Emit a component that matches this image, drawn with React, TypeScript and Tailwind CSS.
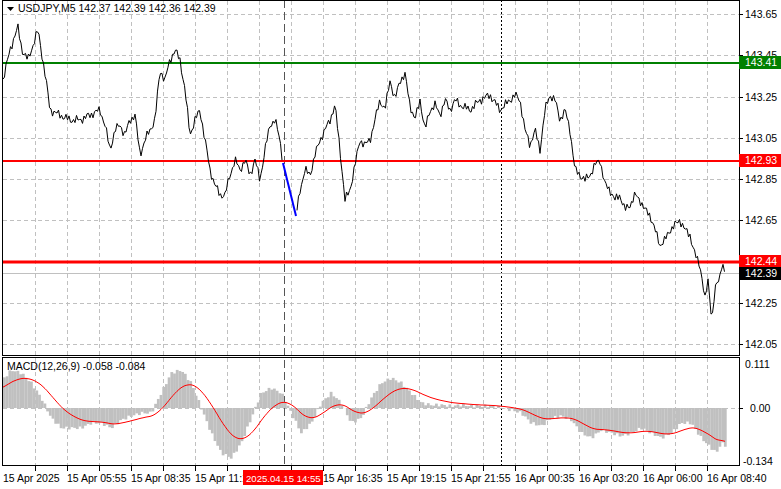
import React from "react";

const priceKeys: [number, number][] = [[3,80],[10,50],[15,35],[18,28],[22,50],[28,60],[33,45],[38,30],[42,55],[46,80],[50,110],[60,115],[70,120],[80,120],[90,115],[100,110],[105,125],[110,150],[115,130],[120,125],[125,135],[130,120],[135,115],[140,155],[145,140],[155,120],[160,70],[165,80],[170,60],[175,50],[180,60],[185,90],[190,135],[195,120],[200,110],[205,140],[210,170],[215,185],[220,195],[225,195],[230,175],[235,160],[240,170],[245,160],[250,175],[255,160],[260,180],[265,150],[270,125],[275,120],[280,140],[283,163],[296,215],[297,210],[300,190],[305,170],[310,175],[315,155],[320,140],[325,130],[330,120],[335,105],[340,150],[345,200],[350,190],[355,165],[360,140],[365,145],[370,140],[375,120],[380,100],[385,110],[390,80],[395,100],[400,80],[405,75],[410,105],[415,120],[420,100],[425,130],[430,110],[435,105],[440,115],[445,100],[450,110],[455,100],[460,105],[470,110],[480,100],[490,95],[500,110],[510,100],[515,95],[520,100],[525,130],[530,145],[535,130],[540,150],[545,110],[550,95],[555,100],[560,120],[565,110],[570,130],[575,170],[580,175],[585,180],[590,175],[595,165],[600,160],[605,185],[610,190],[615,200],[620,195],[625,210],[630,205],[635,195],[640,200],[645,210],[650,215],[655,230],[660,245],[665,240],[670,230],[675,225],[680,220],[685,230],[690,235],[695,255],[700,265],[703,285],[705,300],[708,280],[712,320],[715,290],[720,275],[722,262],[725,275]];

const histKeys: [number, number][] = [[3,30],[10,38],[20,35],[30,25],[40,10],[50,-10],[60,-20],[70,-20],[80,-20],[90,-15],[100,-15],[110,-20],[120,-12],[130,-8],[140,-5],[150,-5],[160,15],[170,35],[180,38],[190,25],[200,0],[210,-25],[220,-45],[230,-50],[240,-35],[250,-10],[260,15],[270,20],[280,15],[290,-5],[300,-25],[310,-15],[320,5],[330,15],[340,5],[350,-15],[360,-10],[370,10],[380,25],[390,30],[400,25],[410,15],[420,5],[430,3],[440,3],[450,2],[460,3],[470,2],[480,2],[490,2],[500,0],[510,-2],[520,-5],[530,-15],[540,-18],[550,-10],[560,-8],[570,-12],[580,-25],[590,-30],[600,-22],[610,-25],[620,-28],[630,-25],[640,-20],[650,-25],[660,-30],[670,-25],[680,-15],[690,-15],[700,-30],[710,-40],[715,-45],[720,-35],[725,-38]];

function interp(keys: [number, number][], x: number) {
  for (let i = 0; i < keys.length - 1; i++) {
    const [x0, y0] = keys[i], [x1, y1] = keys[i + 1];
    if (x >= x0 && x <= x1) return y0 + ((y1 - y0) * (x - x0)) / (x1 - x0 || 1);
  }
  return keys[keys.length - 1][1];
}

const mainPts: string[] = [];
for (let x = 3; x <= 725; x += 1.5) {
  if (x > 283 && x < 296) continue;
  const n = Math.sin(x * 1.7) * 3 + Math.sin(x * 0.63) * 2;
  mainPts.push(`${x},${(interp(priceKeys, x) + n).toFixed(1)}`);
}
const firstPart = mainPts.filter((p) => parseFloat(p) <= 283).join(" ");
const secondPart = mainPts.filter((p) => parseFloat(p) >= 296).join(" ");

const zero = 408;
const bars: { x: number; h: number }[] = [];
for (let x = 3; x <= 725; x += 2.7) bars.push({ x, h: interp(histKeys, x) + Math.sin(x * 0.9) * 1.5 });
const sig: string[] = [];
let s = 20;
for (let x = 3; x <= 725; x += 2) {
  s = s + (interp(histKeys, x) - s) * 0.09;
  sig.push(`${x},${(zero - s).toFixed(1)}`);
}

const levels = ["143.65", "143.45", "143.25", "143.05", "142.85", "142.65", "142.25", "142.05"];
const yOf = (p: number) => 14 + ((143.65 - p) / 0.2) * 41.25;
const vGrid = [35, 67, 99, 131, 163, 195, 227, 259, 291, 323, 355, 387, 419, 451, 483, 515, 547, 579, 611, 643, 675, 707];
const times: [number, string][] = [[3, "15 Apr 2025"], [67, "15 Apr 05:55"], [131, "15 Apr 08:35"], [195, "15 Apr 11:1"], [323, "15 Apr 16:35"], [387, "15 Apr 19:15"], [451, "15 Apr 21:55"], [515, "16 Apr 00:35"], [579, "16 Apr 03:20"], [643, "16 Apr 06:00"], [707, "16 Apr 08:40"]];

export default function App() {
  return (
    <div className="w-[781px] h-[489px] bg-white overflow-hidden" style={{ fontFamily: '"Liberation Sans", Arial, sans-serif' }}>
      <svg width="781" height="489" className="block" fontFamily='"Liberation Sans", Arial, sans-serif' fontSize="10.5">
        {vGrid.map((x) => (
          <g key={x}>
            <line x1={x + 0.5} y1={1} x2={x + 0.5} y2={355} stroke="#c0c0c0" strokeDasharray="4 3" />
            <line x1={x + 0.5} y1={358} x2={x + 0.5} y2={465} stroke="#c0c0c0" strokeDasharray="4 3" />
            <line x1={x + 0.5} y1={466} x2={x + 0.5} y2={471} stroke="#000" />
          </g>
        ))}
        {levels.map((l) => (
          <g key={l}>
            <line x1={3} y1={Math.round(yOf(+l)) + 0.5} x2={739} y2={Math.round(yOf(+l)) + 0.5} stroke="#c0c0c0" strokeDasharray="4 3" />
            <line x1={739} y1={Math.round(yOf(+l)) + 0.5} x2={743} y2={Math.round(yOf(+l)) + 0.5} stroke="#000" />
            <text x={745} y={Math.round(yOf(+l)) + 4} fill="#000">{l}</text>
          </g>
        ))}
        <line x1={3} y1={408.5} x2={739} y2={408.5} stroke="#c0c0c0" strokeDasharray="4 3" />
        <line x1={284.5} y1={0} x2={284.5} y2={466} stroke="#555" strokeDasharray="8 4" />
        <line x1={501.5} y1={0} x2={501.5} y2={466} stroke="#000" strokeDasharray="2 2" />
        <line x1={3} y1={273.5} x2={739} y2={273.5} stroke="#c0c0c0" />
        <line x1={3} y1={63} x2={739} y2={63} stroke="#008000" strokeWidth={2} />
        <line x1={3} y1={161} x2={739} y2={161} stroke="#ff0000" strokeWidth={2} />
        <line x1={3} y1={262} x2={739} y2={262} stroke="#ff0000" strokeWidth={3} />
        <polyline points={firstPart} fill="none" stroke="#000" strokeWidth={1} />
        <polyline points={secondPart} fill="none" stroke="#000" strokeWidth={1} />
        <line x1={283} y1={163} x2={296} y2={216} stroke="#0000ff" strokeWidth={2} />
        {bars.map((b, i) => (
          <rect key={i} x={b.x} y={b.h > 0 ? zero - b.h : zero} width={2.8} height={Math.abs(b.h)} fill="#c0c0c0" />
        ))}
        <polyline points={sig.join(" ")} fill="none" stroke="#ff0000" strokeWidth={1} />
        <rect x={2.5} y={0.5} width={737} height={355} fill="none" stroke="#000" />
        <rect x={2.5} y={357.5} width={737} height={108} fill="none" stroke="#000" />
        <rect x={739} y={56} width={42} height={13} fill="#008000" />
        <text x={745} y={66} fill="#fff">143.41</text>
        <rect x={739} y={154} width={42} height={13} fill="#ff0000" />
        <text x={745} y={164} fill="#fff">142.93</text>
        <rect x={739} y={255} width={42} height={13} fill="#ff0000" />
        <text x={745} y={265} fill="#fff">142.44</text>
        <rect x={739} y={267} width={42} height={13} fill="#000" />
        <text x={745} y={277} fill="#fff">142.39</text>
        <text x={745} y={368} fill="#000">0.111</text>
        <line x1={739} y1={408.5} x2={743} y2={408.5} stroke="#000" />
        <text x={750} y={412} fill="#000">0.00</text>
        <text x={743} y={465} fill="#000">-0.134</text>
        <polygon points="7,7 14,7 10.5,11" fill="#000" />
        <text x={18} y={12} fill="#000">USDJPY,M5  142.37 142.39 142.36 142.39</text>
        <text x={7} y={370} fill="#000">MACD(12,26,9) -0.058 -0.084</text>
        {times.map(([x, t]) => (
          <text key={t} x={x} y={482} fill="#000">{t}</text>
        ))}
        <rect x={243} y={470} width={80} height={15} fill="#ff0000" />
        <text x={246} y={482} fill="#fff" fontSize="9.6">2025.04.15 14:55</text>
      </svg>
    </div>
  );
}
